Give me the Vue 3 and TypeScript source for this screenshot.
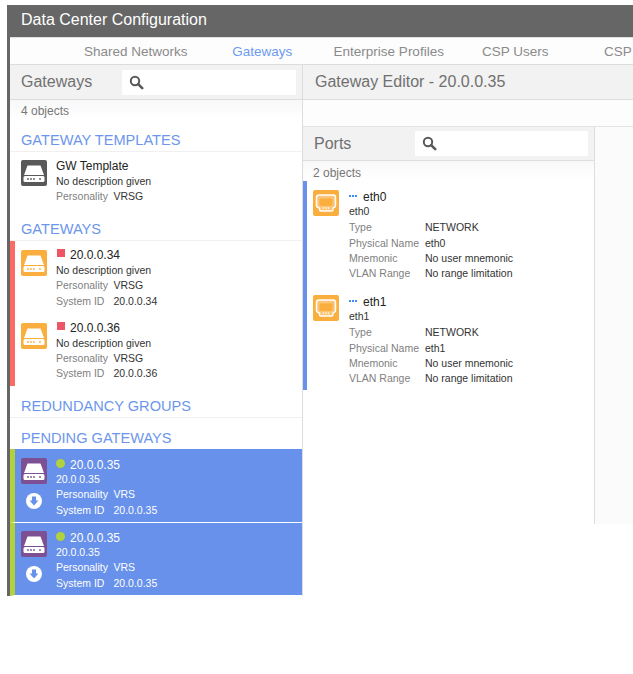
<template>
  <div class="frame">
    <header class="title-bar">Data Center Configuration</header>
    <nav class="tabs">
      <span v-for="tab in tabs" :key="tab" class="tab" :class="{ active: tab === 'Gateways' }">{{ tab }}</span>
    </nav>
    <div class="columns">
      <section class="left">
        <div class="panel-head">
          <span class="panel-title">Gateways</span>
          <div class="search">
            <svg width="15" height="15" viewBox="0 0 15 15"><circle cx="6" cy="6" r="4.2" fill="none" stroke="#595959" stroke-width="2" /><path d="M9.2 9.2 13.2 13.2" stroke="#595959" stroke-width="2.6" stroke-linecap="round" /></svg>
          </div>
        </div>
        <div class="count">4 objects</div>

        <h3 class="group first">GATEWAY TEMPLATES</h3>
        <div class="gw template">
          <div class="gw-side">
            <svg class="icon" viewBox="0 0 26 26"><rect width="26" height="26" rx="2" fill="#595959" /><path d="M6.500 5.500h13l3.500 9.500H3z" fill="#fff" /><rect x="2.500" y="16" width="21" height="6" rx="1.500" fill="#fff" /><g fill="#595959"><circle cx="7" cy="19" r=".9" /><circle cx="10" cy="19" r=".9" /><circle cx="13" cy="19" r=".9" /><circle cx="19" cy="19" r=".9" /></g></svg>
          </div>
          <div class="gw-text">
            <div class="name">GW Template</div>
            <div class="line">No description given</div>
            <div class="line"><span class="key">Personality</span>VRSG</div>
          </div>
        </div>

        <h3 class="group gateways-title">GATEWAYS</h3>
        <div class="strip-red">
          <div v-for="g in gateways" :key="g" class="gw">
            <div class="gw-side">
              <svg class="icon" viewBox="0 0 26 26"><rect width="26" height="26" rx="2" fill="#f9ae3d" /><path d="M6.500 5.500h13l3.500 9.500H3z" fill="#fff" /><rect x="2.500" y="16" width="21" height="6" rx="1.500" fill="#fff" /><g fill="#f9ae3d"><circle cx="7" cy="19" r=".9" /><circle cx="10" cy="19" r=".9" /><circle cx="13" cy="19" r=".9" /><circle cx="19" cy="19" r=".9" /></g></svg>
            </div>
            <div class="gw-text">
              <div class="name"><i class="square"></i>{{ g }}</div>
              <div class="line">No description given</div>
              <div class="line"><span class="key">Personality</span>VRSG</div>
              <div class="line"><span class="key">System ID</span>{{ g }}</div>
            </div>
          </div>
        </div>

        <h3 class="group redundancy">REDUNDANCY GROUPS</h3>
        <h3 class="group pending-title">PENDING GATEWAYS</h3>
        <div v-for="n in 2" :key="n" class="gw pending">
          <div class="gw-side">
            <svg class="icon" viewBox="0 0 26 26"><rect width="26" height="26" rx="2" fill="#7d4f93" /><path d="M6.500 5.500h13l3.500 9.500H3z" fill="#fff" /><rect x="2.500" y="16" width="21" height="6" rx="1.500" fill="#fff" /><g fill="#7d4f93"><circle cx="7" cy="19" r=".9" /><circle cx="10" cy="19" r=".9" /><circle cx="13" cy="19" r=".9" /><circle cx="19" cy="19" r=".9" /></g></svg>
            <svg class="down" width="16" height="16" viewBox="0 0 16 16"><circle cx="8" cy="8" r="8" fill="#fff" /><path d="M6 3.500h4v4h2.400L8 12.500 3.600 7.500H6z" fill="#6791ea" /></svg>
          </div>
          <div class="pending-text">
            <div class="name"><i class="dot"></i>20.0.0.35</div>
            <div class="line">20.0.0.35</div>
            <div class="line"><span class="key">Personality</span>VRS</div>
            <div class="line"><span class="key">System ID</span>20.0.0.35</div>
          </div>
        </div>
      </section>

      <section class="right">
        <div class="panel-head editor-head">
          <span class="panel-title">Gateway Editor - 20.0.0.35</span>
        </div>
        <div class="toolbar"></div>
        <div class="editor-body">
          <div class="ports">
            <div class="panel-head ports-head">
              <span class="panel-title ports-title">Ports</span>
              <div class="search">
                <svg width="15" height="15" viewBox="0 0 15 15"><circle cx="6" cy="6" r="4.2" fill="none" stroke="#595959" stroke-width="2" /><path d="M9.2 9.2 13.2 13.2" stroke="#595959" stroke-width="2.6" stroke-linecap="round" /></svg>
              </div>
            </div>
            <div class="count ports-count">2 objects</div>
            <div class="strip-blue">
              <div v-for="p in ports" :key="p" class="port">
                <svg class="icon" viewBox="0 0 26 26"><rect width="26" height="26" rx="2" fill="#f9ae3d" /><path d="M6 5h14q2.500 0 2.500 2.500v8q0 1-.8 1.500l-1.700 1.200v1.300q0 1.500-1.500 1.500H8q-1.500 0-1.500-1.500v-1.300L4.300 17q-.8-.5-.8-1.500v-8Q3.500 5 6 5z" fill="#fbc476" stroke="#fff" stroke-width="1.500" /><path d="M6.500 8.500h13v6l-1.500 1.500H8L6.500 14.500z" fill="#f9ae3d" /><g fill="#fff"><circle cx="10.500" cy="18" r=".8" /><circle cx="13" cy="18" r=".8" /><circle cx="15.500" cy="18" r=".8" /></g></svg>
                <div>
                  <div class="name port-name"><i class="dashes"></i>{{ p }}</div>
                  <div class="line">{{ p }}</div>
                  <div class="rows">
                    <div class="line"><span class="key wide">Type</span>NETWORK</div>
                    <div class="line"><span class="key wide">Physical Name</span>{{ p }}</div>
                    <div class="line"><span class="key wide">Mnemonic</span>No user mnemonic</div>
                    <div class="line"><span class="key wide">VLAN Range</span>No range limitation</div>
                  </div>
                </div>
              </div>
            </div>
          </div>
          <div class="blank"></div>
        </div>
      </section>
    </div>
  </div>
</template>

<script setup lang="ts">
const tabs: string[] = ['Shared Networks', 'Gateways', 'Enterprise Profiles', 'CSP Users', 'CSP']
const gateways: string[] = ['20.0.0.34', '20.0.0.36']
const ports: string[] = ['eth0', 'eth1']
</script>

<style>
html,
body {
  background: #fff;
  overflow: hidden;
}
</style>

<style scoped>
.frame {
  width: 626px;
  height: 591px;
  margin: 5px 0 0 7px;
  border-left: 3px solid #666;
  box-sizing: border-box;
  overflow: hidden;
  font-family: 'Liberation Sans', Arial, sans-serif;
  color: #333;
}

.title-bar {
  height: 32px;
  line-height: 30px;
  padding-left: 11px;
  background: #666;
  color: #fff;
  font-size: 16px;
  border-bottom: 1px solid #e0e0e0;
}

.tabs {
  display: flex;
  height: 27px;
  line-height: 28px;
  padding-left: 62.500px;
  background: #fdfdfd;
  border-bottom: 1px solid #ddd;
  font-size: 13.500px;
  white-space: nowrap;
  box-sizing: border-box;
  color: #8a8a8a;
}

.tab {
  width: 126.500px;
  flex: none;
  text-align: center;
}

.tab:last-child {
  text-align: left;
  padding-left: 25.500px;
}

.tab.active {
  color: #6d9bef;
}

.columns {
  display: flex;
}

.left {
  width: 293px;
  flex: none;
  border-right: 1px solid #ddd;
  box-sizing: border-box;
  height: 532px;
}

.right {
  flex: 1;
  min-width: 0;
}

.panel-head {
  display: flex;
  align-items: center;
  height: 35px;
  padding: 0 6px 0 11px;
  background: #f2f2f2;
  border-bottom: 1px solid #ddd;
  box-sizing: border-box;
}

.panel-title {
  width: 101px;
  flex: none;
  font-size: 16px;
  color: #707070;
}

.search {
  flex: 1;
  height: 25px;
  background: #fff;
  display: flex;
  align-items: center;
  padding-left: 7px;
}

.count {
  height: 20px;
  line-height: 23px;
  padding-left: 11px;
  font-size: 12px;
  color: #777;
  background: linear-gradient(#f8f8f8, #fff);
}

.ports-count {
  line-height: 25px;
  padding-left: 10px;
}

.group {
  margin: 0;
  height: 32px;
  line-height: 41px;
  padding-left: 11px;
  font-size: 14.600px;
  font-weight: 400;
  color: #6c96ec;
  border-bottom: 1px solid #f0f0f0;
  box-sizing: content-box;
}

.group.first {
  margin-bottom: 8px;
  height: 31px;
}

.group.gateways-title {
  line-height: 43px;
}

.group.redundancy {
  height: 31px;
}

.group.pending-title {
  border-bottom: 0;
  height: 31px;
}

.gw {
  display: flex;
  height: 73px;
  padding: 9px 0 0 11px;
  box-sizing: border-box;
}

.gw.template {
  height: 48px;
  padding-top: 0;
}

.gw.template .gw-text {
  margin-top: -1px;
}

.strip-red .gw-text {
  margin-top: -2px;
}

.gw-side {
  width: 35px;
  flex: none;
  display: flex;
  flex-direction: column;
  align-items: flex-start;
}

.icon {
  width: 26px;
  height: 26px;
  flex: none;
}

.name {
  font-size: 12px;
  line-height: 15px;
  color: #222;
  display: flex;
  align-items: center;
  height: 15px;
}

.line {
  font-size: 10.500px;
  line-height: 15.300px;
  white-space: nowrap;
  color: #333;
}

.key {
  display: inline-block;
  width: 57.500px;
  color: #808080;
}

.key.wide {
  width: 76px;
}

.strip-red {
  border-left: 5px solid #f96b63;
  height: 145px;
}

.strip-red .gw {
  padding-left: 6px;
  height: 72.500px;
}

.square {
  width: 8px;
  height: 8px;
  margin: -5px 5px 0 1px;
  background: #ee5567;
  flex: none;
}

.pending {
  height: 74px;
  padding-left: 6px;
  background: #6791ea;
  border-left: 5px solid #b1d13e;
  border-bottom: 1px solid #fff;
}

.pending + .pending {
  height: 73px;
  padding-top: 8px;
}

.pending .name {
  margin-bottom: -1px;
}

.pending .name,
.pending .line,
.pending .key {
  color: #fff;
}

.down {
  margin: 9px 0 0 5px;
}

.dot {
  width: 9px;
  height: 9px;
  margin: -5px 5px 0 0;
  border-radius: 50%;
  background: #b1d13e;
  flex: none;
}

.editor-head .panel-title {
  width: auto;
}

.editor-head {
  padding-left: 12px;
}

.toolbar {
  height: 27px;
  background: #fdfdfd;
  border-bottom: 1px solid #e4e4e4;
  box-sizing: border-box;
}

.editor-body {
  display: flex;
  height: 397px;
}

.ports {
  width: 292px;
  flex: none;
  border-right: 1px solid #ddd;
  box-sizing: border-box;
}

.ports-head {
  height: 34px;
}

.ports-title {
  width: 101px;
}

.strip-blue {
  border-left: 4px solid #6791ea;
  height: 209px;
}

.port {
  display: flex;
  gap: 10px;
  height: 105px;
  padding: 9px 0 0 6px;
  box-sizing: border-box;
}

.port-name {
  height: 14px;
}

.dashes {
  width: 9px;
  height: 2px;
  margin: -2px 5px 0 0;
  background: repeating-linear-gradient(90deg, #3f8ef5 0 2px, #fff 2px 3px);
  flex: none;
}

.rows {
  margin-top: 1px;
}

.blank {
  flex: 1;
  background: #fbfbfb;
}
</style>
